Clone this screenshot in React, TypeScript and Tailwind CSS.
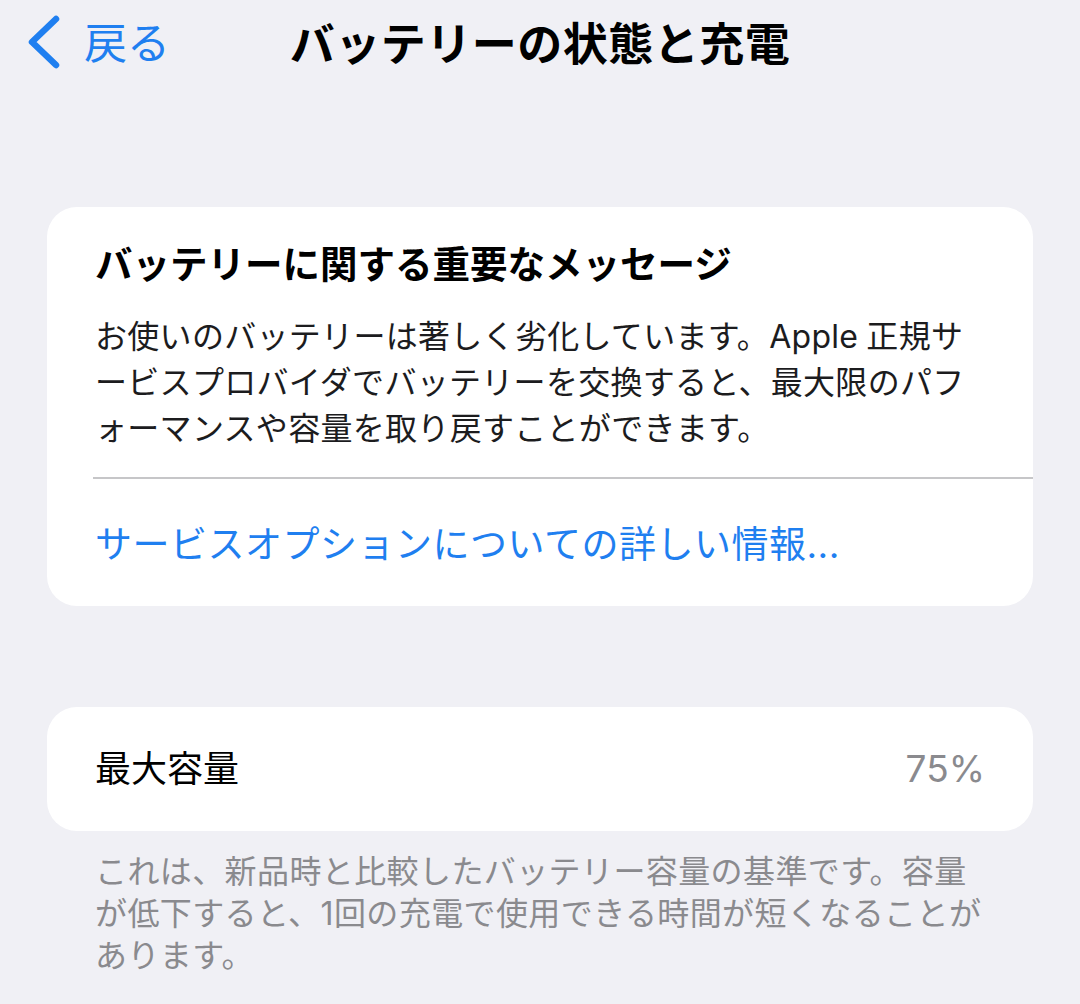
import React from "react";

const font = { fontFamily: '"Inter", "Noto Sans CJK JP", sans-serif' };

export default function App() {
  return (
    <div
      className="w-[1080px] h-[1004px] bg-[#f0f0f5] overflow-hidden text-black"
      style={font}
    >
      {/* Nav bar */}
      <div className="grid grid-cols-[1fr_auto_1fr] items-center h-[88px]">
        <div className="flex items-center pl-[24px]">
          <svg width="38" height="58" viewBox="0 0 38 58" className="mt-[-4px]">
            <polyline
              points="32,6 8,29 32,52"
              fill="none"
              stroke="#1f7ff0"
              strokeWidth="6.5"
              strokeLinecap="round"
              strokeLinejoin="round"
            />
          </svg>
          <span className="ml-[22px] text-[43px] leading-none text-[#1f7ff0] mt-[-2px]">
            戻る
          </span>
        </div>
        <div className="text-[45px] font-bold leading-none tracking-[0.5px]">
          バッテリーの状態と充電
        </div>
        <div />
      </div>

      {/* Card 1 */}
      <div className="mt-[119px] mx-[47px] bg-white rounded-[30px] overflow-hidden">
        <div className="pl-[48px] pr-[30px] pt-[35px]">
          <div className="text-[37.5px] font-bold leading-[46px]">
            バッテリーに関する重要なメッセージ
          </div>
          <div className="mt-[26px] text-[32px] leading-[46px] text-[#1c1c1e] tracking-[0.3px] whitespace-nowrap">
            <div>
              お使いのバッテリーは著しく劣化しています。Apple
              <span className="ml-[8px]">正規サ</span>
            </div>
            <div>ービスプロバイダでバッテリーを交換すると、最大限のパフ</div>
            <div>ォーマンスや容量を取り戻すことができます。</div>
          </div>
        </div>
        <div className="ml-[46px] mt-[25px] h-[1.5px] bg-[#c6c6c8]" />
        <div className="pl-[48px] pt-[43px] pb-[38px] text-[37px] leading-[46px] tracking-[0.5px] text-[#1f7ff0]">
          サービスオプションについての詳しい情報...
        </div>
      </div>

      {/* Card 2 */}
      <div className="mt-[101px] mx-[47px] bg-white rounded-[30px] h-[124px] flex items-center justify-between px-[48px]">
        <span className="text-[36px] leading-none">最大容量</span>
        <span className="text-[37px] leading-none text-[#8a8a8e]">75%</span>
      </div>

      {/* Footer */}
      <div className="mt-[20px] px-[95px] text-[32px] leading-[42px] tracking-[0.4px] text-[#8a8a8e] whitespace-nowrap">
        <div>これは、新品時と比較したバッテリー容量の基準です。容量</div>
        <div>が低下すると、1回の充電で使用できる時間が短くなることが</div>
        <div>あります。</div>
      </div>
    </div>
  );
}
